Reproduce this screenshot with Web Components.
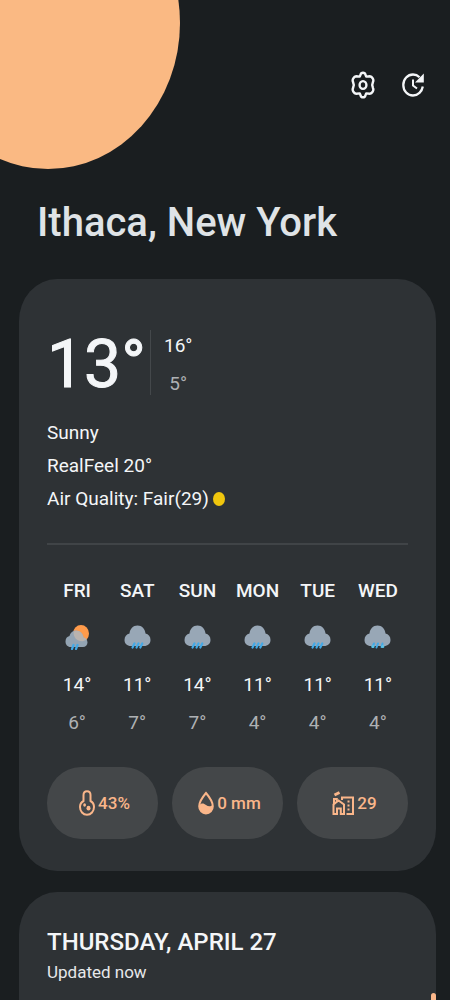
<!DOCTYPE html>
<html lang="en">
<head>
<meta charset="utf-8">
<meta name="viewport" content="width=device-width, initial-scale=1">
<title>Weather</title>
<style>
  html { background: #1a1e20; scrollbar-width: none; }
  body { margin: 0; font-family: Roboto, "Noto Sans", sans-serif; font-size: 19px; color: #f4f6f8; }
</style>
</head>
<body>
<weather-app></weather-app>
<script>
const define = (name, markup, setup) => {
  const template = document.createElement('template');
  template.innerHTML = markup;
  customElements.define(name, class extends HTMLElement {
    constructor() {
      super();
      this.attachShadow({ mode: 'open' }).append(template.content.cloneNode(true));
    }
    connectedCallback() { if (setup) setup(this, this.shadowRoot); }
  });
};

const cloud = `<path d="M7 21C3 21 .5 18.500 .5 15C.5 11.500 2.500 9.200 5.500 8.500C6 4 9 .5 13.500 .5C18 .5 21 4 21.500 8.500C24.500 9.200 26.500 11.500 26.500 15C26.500 18.500 24 21 20 21Z" fill="#98a7b6"/>`;
const weatherIcons = {
  rain: cloud + `<path d="M10.500 18.500L8.500 22.500M14.500 18.500L12.500 22.500M18.300 18.500L16.300 22.500" stroke="#42a9e6" stroke-width="2.200" stroke-linecap="round"/>`,
  sleet: cloud + `<path d="M10 18.500L8.500 22M18.500 18.500L17.500 22M14 18.500L12.500 22.500" stroke="#42a9e6" stroke-width="2" stroke-linecap="round"/><circle cx="9" cy="21.500" r="1.600" fill="#5cc3e6"/><circle cx="18.800" cy="21.500" r="1.600" fill="#5cc3e6"/>`,
  sunrain: `<ellipse cx="17" cy="8.500" rx="8" ry="8.500" fill="#ff9b4b"/><path d="M6.500 22C3.500 22 1.500 19.500 1.500 16.500C1.500 13.500 3 11.500 5.500 11C6.200 8 8.500 5.500 12 5.500C16 5.500 19 8.500 19.500 12.500C22 13 23.500 15 23.500 17.500C23.500 20 21.500 22 19 22Z" fill="#93a4b3"/><path d="M9.600 7C11 4.800 17 5 19 10.500C19.300 11.300 19.500 12 19.500 12.500C21 12.800 22 13.500 22.600 14.500C17 19 9 14.500 9.600 7Z" fill="#b9b3ae"/><path d="M9.500 20L8 24M13.500 20L12 24" stroke="#42a9e6" stroke-width="2.200" stroke-linecap="round"/>`
};
const metricIcons = {
  humidity: `<svg width="16" height="26" viewBox="0 0 16 26" fill="none" stroke="currentColor" stroke-width="2"><path d="M4.500 11V5C4.500 2.700 6 1.300 8 1.300S11.500 2.700 11.500 5V11C13.700 12.200 15 14.400 15 17C15 21.300 12 24.700 8 24.700S1 21.300 1 17C1 14.400 2.300 12.200 4.500 11Z"/><ellipse cx="5.600" cy="15" rx="1.400" ry="1.800" fill="currentColor" stroke="none"/><ellipse cx="9.500" cy="18.200" rx="2" ry="2.400" fill="currentColor" stroke="none"/></svg>`,
  rain: `<svg width="16" height="24" viewBox="0 0 16 24" fill="none"><path d="M8 2C8 2 1.200 10 1.200 15.300C1.200 19.300 4.200 22.500 8 22.500S14.800 19.300 14.800 15.300C14.800 10 8 2 8 2Z" stroke="currentColor" stroke-width="2"/><path d="M1.500 14C4 11.500 6 12.500 8 14S12.500 16 14.500 14C15.500 19 12 22.500 8 22.500S.5 19 1.500 14Z" fill="currentColor"/></svg>`,
  air: `<svg width="22" height="26" viewBox="1 0 22 26" fill="none" stroke="currentColor" stroke-width="2"><path d="M2.500 24V14.500L7.500 10.500L13 14.500V24H9.800V18.500H6V24Z"/><path d="M3 14V9H5.800V11.500"/><path d="M3.500 5L8.500 2.500" stroke-width="3"/><path d="M11 10V7.500H22V24H15.500"/><path d="M16.500 11.500H18.500M16.500 15.500H18.500M16.500 19.500H18.500" stroke-width="1.800"/></svg>`
};

define('icon-button', `
<style>
  :host { display: block; }
  button { display: grid; place-items: center; width: 50px; height: 50px; padding: 0; border: 0; border-radius: 25px; background: none; color: #f4f6f8; cursor: pointer; }
</style>
<button type="button"><slot></slot></button>`,
(host, root) => root.querySelector('button').setAttribute('aria-label', host.getAttribute('label')));

define('app-bar', `
<style>
  :host { display: block; position: relative; padding: 60px 12px 32px 37px; }
  .sun { position: absolute; left: -84px; top: -123px; width: 264px; height: 292px; border-radius: 50%; background: #fab983; }
  nav { display: flex; justify-content: flex-end; position: relative; }
  h1 { margin: 89px 0 0; font-size: 40px; line-height: 48px; font-weight: 500; color: #dfe3e6; }
</style>
<div class="sun"></div>
<nav aria-label="Actions">
  <icon-button label="Settings">
    <svg width="24" height="28" viewBox="0 0 24 28" fill="none" stroke="currentColor" stroke-width="2.400" stroke-linejoin="round"><path d="M10 2.500Q12 .8 14 2.500L15.200 5.600L18.800 5.300Q20.600 5.400 21.700 7.400Q22.800 9.300 22 10.900L21.200 14L22 17.100Q22.800 18.700 21.700 20.600Q20.600 22.600 18.800 22.700L15.200 22.400L14 25.500Q12 27.200 10 25.500L8.800 22.400L5.200 22.700Q3.400 22.600 2.300 20.600Q1.200 18.700 2 17.100L2.800 14L2 10.900Q1.200 9.300 2.300 7.400Q3.400 5.400 5.200 5.300L8.800 5.600Z"/><ellipse cx="12" cy="14" rx="3.400" ry="3.900"/></svg>
  </icon-button>
  <icon-button label="Refresh">
    <svg width="24" height="26" viewBox="0 0 24 26" fill="none" stroke="currentColor" stroke-width="2.300"><path d="M18.500 5.200C16.800 3.500 14.600 2.500 12 2.500C6.700 2.500 2.300 7 2.300 13S6.700 23.500 12 23.500C17 23.500 21 19.500 21.800 14.500"/><path d="M22.800 1.500V10.500H14Z" fill="currentColor" stroke="none"/><path d="M12 7.500V13.500L16 16.500" stroke-width="2"/></svg>
  </icon-button>
</nav>
<h1><slot></slot></h1>`);

define('weather-card', `
<style>
  :host { display: block; margin: 0 14px 21px 19px; padding: 51px 28px 32px; border-radius: 38px / 42px; background: #2e3235; }
  :host([compact]) { padding-top: 34px; }
</style>
<slot></slot>`);

define('current-weather', `
<style>
  :host { display: block; padding-bottom: 28px; border-bottom: 2px solid #404447; }
  .now { display: flex; height: 65px; }
  .temp { box-sizing: border-box; width: 104px; border-right: 1px solid #44484b; font-size: 66px; line-height: 70px; font-weight: 400; -webkit-text-stroke: 1px currentColor; }
  .range { display: flex; flex-direction: column; gap: 10px; align-items: center; margin-left: 13px; padding-top: 2px; line-height: 28px; }
  .low { color: #aeb1b4; }
  ul { margin: 21px 0 0; padding: 0; list-style: none; line-height: 33px; }
  .air { display: flex; align-items: center; gap: 4px; }
  .dot { width: 12px; height: 14px; border-radius: 50%; background: #f0c60d; }
</style>
<div class="now">
  <div class="temp">13°</div>
  <div class="range"><span>16°</span><span class="low">5°</span></div>
</div>
<ul>
  <li>Sunny</li>
  <li>RealFeel 20°</li>
  <li class="air"><span>Air Quality: Fair(29)</span><span class="dot"></span></li>
</ul>`);

define('forecast-day', `
<style>
  :host { display: flex; flex-direction: column; align-items: center; line-height: 28px; }
  .day { font-weight: 500; }
  svg { margin: 20px 0 21px; }
  .low { margin-top: 10px; color: #aeb1b4; }
</style>
<span class="day"></span>
<svg width="27" height="25" viewBox="0 0 27 25" fill="none" aria-hidden="true"></svg>
<span class="high"></span>
<span class="low"></span>`,
(host, root) => {
  for (const key of ['day', 'high', 'low']) root.querySelector('.' + key).textContent = host.getAttribute(key);
  root.querySelector('svg').innerHTML = weatherIcons[host.getAttribute('icon')];
});

define('forecast-week', `
<style>
  :host { display: grid; grid-template-columns: repeat(6, 1fr); margin: 32px 0 30px; }
</style>
<slot></slot>`);

define('metric-row', `
<style>
  :host { display: grid; grid-template-columns: repeat(3, 1fr); gap: 14px; }
</style>
<slot></slot>`);

define('metric-chip', `
<style>
  :host { display: block; }
  button { display: flex; justify-content: center; align-items: center; gap: 3px; width: 100%; height: 72px; padding: 0 0 0 4px; border: 0; border-radius: 34px / 36px; background: #444749; color: #fab68a; font: 500 17px/24px Roboto, "Noto Sans", sans-serif; cursor: pointer; }
  .icon { display: flex; }
</style>
<button type="button"><span class="icon"></span><span><slot></slot></span></button>`,
(host, root) => { root.querySelector('.icon').innerHTML = metricIcons[host.getAttribute('icon')]; });

define('day-detail', `
<style>
  :host { display: block; }
  h2 { margin: 0; font-size: 24px; line-height: 32px; font-weight: 500; }
  p { margin: 2px 0 9px; font-size: 17px; line-height: 24px; color: #e6e8ea; }
  .marker { width: 5px; height: 60px; margin: 0 -28px 0 auto; border-radius: 3px; background: #fab68a; }
</style>
<h2>THURSDAY, APRIL 27</h2>
<p>Updated now</p>
<div class="marker"></div>`);

define('weather-app', `
<style>
  :host { display: block; height: 100vh; overflow: hidden auto; scrollbar-width: none; background: #1a1e20; }
</style>
<app-bar>Ithaca, New York</app-bar>
<main>
  <weather-card>
    <current-weather></current-weather>
    <forecast-week>
      <forecast-day day="FRI" icon="sunrain" high="14°" low="6°"></forecast-day>
      <forecast-day day="SAT" icon="rain" high="11°" low="7°"></forecast-day>
      <forecast-day day="SUN" icon="rain" high="14°" low="7°"></forecast-day>
      <forecast-day day="MON" icon="rain" high="11°" low="4°"></forecast-day>
      <forecast-day day="TUE" icon="rain" high="11°" low="4°"></forecast-day>
      <forecast-day day="WED" icon="sleet" high="11°" low="4°"></forecast-day>
    </forecast-week>
    <metric-row>
      <metric-chip icon="humidity">43%</metric-chip>
      <metric-chip icon="rain">0 mm</metric-chip>
      <metric-chip icon="air">29</metric-chip>
    </metric-row>
  </weather-card>
  <weather-card compact>
    <day-detail></day-detail>
  </weather-card>
</main>`);
</script>
</body>
</html>
